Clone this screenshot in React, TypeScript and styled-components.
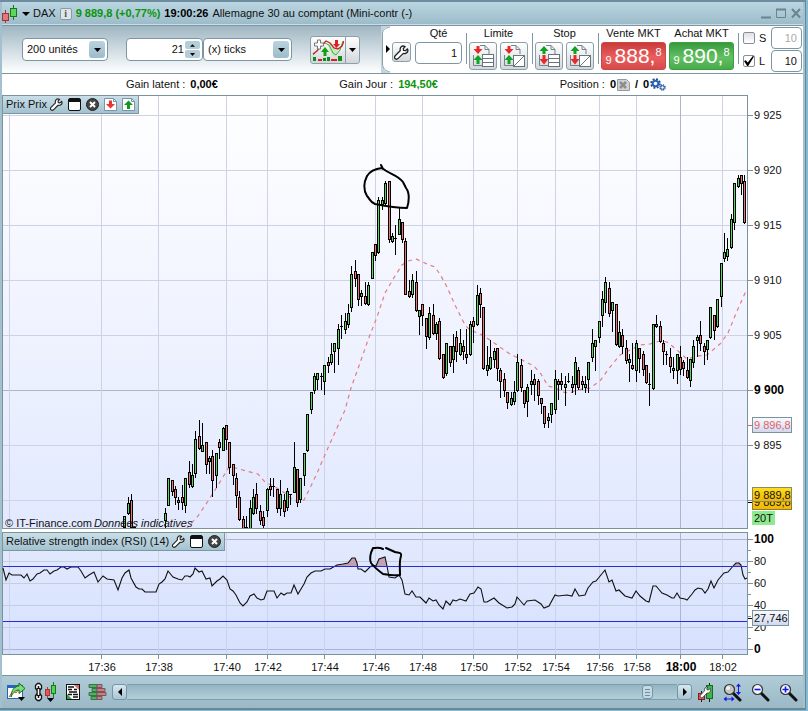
import React from "react";
import styled, { createGlobalStyle, css } from "styled-components";

const GlobalStyle = createGlobalStyle`
  * { box-sizing: border-box; }
  body {
    margin: 0;
    background: #86b9d4;
    font-family: "Liberation Sans", Arial, sans-serif;
    font-size: 11px;
    line-height: 13px;
    color: #111;
  }
  button, input, select { font: inherit; color: inherit; margin: 0; padding: 0; }
  svg { display: block; flex: none; }
`;

/* ---------- window frame ---------- */

const Window = styled.main`
  border-top: 2px solid #6d8d9e;
  border-bottom: 2px solid #6b8794;
  border-right: 1px solid #6b8794;
  margin-right: 2px;
  padding: 0 2px 0 2px;
  background: #a2c0cd;
`;

const TitleBar = styled.header`
  display: flex;
  align-items: center;
  height: 24px;
  border-bottom: 1px solid #7c97a3;
  box-shadow: 0 -1px 0 #c9dde6 inset;
  background: linear-gradient(#bbd6e2, #9bbac8);
`;

const Ghost = styled.button`
  display: inline-flex;
  align-items: center;
  justify-content: center;
  border: 0;
  background: none;
  flex: none;
`;

const Instrument = styled(Ghost)`
  gap: 3px;
`;

const InfoButton = styled.button`
  width: 12px;
  height: 12px;
  margin: 0 4px;
  border: 1px solid #8a9aa3;
  border-radius: 2px;
  background: #dfe6ea;
  font: bold 10px/9px "Liberation Serif", serif;
  color: #555;
`;

const Quote = styled.strong`
  color: #0b940b;
`;

const Clock = styled.strong`
  margin: 0 4px;
  color: #000;
`;

const WindowButtons = styled.div`
  display: flex;
  gap: 4px;
  margin-left: auto;
  padding-right: 2px;
`;

/* ---------- toolbar ---------- */

const Toolbar = styled.div`
  display: flex;
  height: 48px;
  border-bottom: 1px solid #7d97a2;
  background: #fff;
`;

const ChartControls = styled.div`
  display: flex;
  align-items: center;
  flex: 1;
  padding-left: 20px;
  background: linear-gradient(#9fb6c2, #d4dfe5 55%, #ffffff);
`;

const field = css`
  border: 1px solid #7b97a6;
  border-radius: 4px;
  background: #fff;
`;

const SelectBox = styled.label<{ $width: number; $gap: number }>`
  ${field}
  position: relative;
  display: block;
  width: ${(p) => p.$width}px;
  height: 23px;
  margin-right: ${(p) => p.$gap}px;
  select {
    appearance: none;
    width: 100%;
    height: 21px;
    padding-left: 4px;
    border: 0;
    border-radius: 4px;
    background: none;
  }
`;

const SelectArrow = styled.span`
  position: absolute;
  top: 2px;
  right: 2px;
  display: grid;
  place-items: center;
  width: 16px;
  height: 17px;
  border-radius: 3px;
  background: linear-gradient(#b9d3de, #9dbccb);
  pointer-events: none;
`;

const Stepper = styled.div`
  ${field}
  display: flex;
  align-items: center;
  width: 77px;
  height: 23px;
  padding-right: 2px;
  input {
    width: 57px;
    border: 0;
    background: none;
    text-align: right;
    outline: none;
  }
`;

const StepButtons = styled.div`
  display: grid;
  gap: 1px;
  margin-left: 1px;
`;

const StepButton = styled.button`
  display: grid;
  place-items: center;
  width: 15px;
  height: 8px;
  border: 0;
  border-radius: 2px;
  background: #b3ced9;
`;

const raised = css`
  display: grid;
  place-items: center;
  border: 1px solid #8ba0aa;
  border-radius: 3px;
  background: linear-gradient(#ffffff, #d3d7da);
`;

const SplitButton = styled.div`
  display: flex;
  height: 28px;
  margin-left: 18px;
`;

const IndicatorButton = styled.button`
  ${raised}
  width: 36px;
  border-radius: 3px 0 0 3px;
`;

const MenuButton = styled.button`
  ${raised}
  width: 15px;
  margin-left: -1px;
  border-radius: 0 3px 3px 0;
`;

const TradePanel = styled.div`
  display: flex;
  flex: none;
`;

const Fold = styled.button`
  width: 10px;
  height: 47px;
  border: 0;
  background: none;
`;

const WrenchButton = styled.button`
  ${raised}
  width: 19px;
  height: 20px;
  margin: 16px 4px 0 1px;
`;

const Group = styled.div`
  display: grid;
  align-content: start;
  justify-items: center;
  row-gap: 2px;
  padding-top: 1px;
`;

const Deals = styled.div`
  display: flex;
  gap: 3px;
`;

const ButtonPair = styled.div`
  display: flex;
  gap: 3px;
`;

const OrderButton = styled.button`
  ${raised}
  width: 28px;
  height: 28px;
`;

const Divider = styled.span`
  width: 1px;
  height: 31px;
  margin: 7px 2px 0 4px;
  background: #7e98a4;
`;

const NumberField = styled.input<{ $width: number; $muted?: boolean }>`
  ${field}
  width: ${(p) => p.$width}px;
  height: 22px;
  padding-right: 4px;
  text-align: right;
  color: ${(p) => (p.$muted ? "#a9a9a9" : "#111")};
`;

const DealButton = styled.button<{ $side: "sell" | "buy" }>`
  display: flex;
  justify-content: center;
  width: 65px;
  height: 28px;
  border: 1px solid ${(p) => (p.$side === "sell" ? "#c94848" : "#3d9e43")};
  border-radius: 3px;
  background: ${(p) =>
    p.$side === "sell"
      ? "linear-gradient(#c93b3b, #ea5e5e 55%, #d84a4a)"
      : "linear-gradient(#379a3c, #63c063 55%, #48ab4b)"};
  color: #fff;
  b { font-size: 21px; line-height: 26px; font-weight: 400; }
`;

const Lead = styled.span`
  align-self: end;
  padding-bottom: 2px;
  margin-right: 3px;
`;

const Tail = styled.sup`
  font-size: 11px;
  line-height: 19px;
`;

const Protection = styled.div`
  display: grid;
  grid-template-columns: 12px 8px 31px;
  column-gap: 4px;
  row-gap: 1px;
  align-items: center;
  align-content: start;
  padding: 1px 1px 0 2px;
`;

const Tick = styled.input`
  appearance: none;
  display: grid;
  place-items: center;
  width: 12px;
  height: 12px;
  border: 1px solid #7f929c;
  border-radius: 2px;
  background: linear-gradient(#e0e0e0, #ffffff);
  &:checked { background: #fff; }
  &:checked::after {
    content: "";
    width: 10px;
    height: 10px;
    background: #000;
    clip-path: polygon(0 50%, 18% 42%, 38% 66%, 88% 0, 100% 6%, 42% 100%, 32% 100%);
  }
`;

/* ---------- status line ---------- */

const Status = styled.div`
  display: grid;
  grid-template-columns: 213fr 220fr 243fr;
  align-items: center;
  height: 21px;
  padding-left: 124px;
  background: #fff;
`;

const Metric = styled.div`
  display: flex;
  align-items: center;
  gap: 5px;
  b { color: #000; }
`;

const Gain = styled.b`
  && { color: #0b940b; }
`;

const Count = styled.span`
  display: flex;
  align-items: center;
  gap: 1px;
`;

/* ---------- charts ---------- */

const Pane = styled.section`
  position: relative;
  background: #fff;
  > svg { width: 100%; height: auto; }
  text { font-size: 11px; fill: #111; }
  text.major { font-size: 12px; font-weight: bold; fill: #000; }
  text.average { fill: #e06464; }
`;

const PaneTag = styled.div`
  position: absolute;
  top: 1px;
  left: 1px;
  display: flex;
  align-items: center;
  gap: 3px;
  height: 18px;
  padding: 0 3px;
  border-right: 1px solid #7d97a2;
  border-bottom: 1px solid #7d97a2;
  background: linear-gradient(#c9dfe8, #a3c2cf);
`;

/* ---------- bottom bar ---------- */

const BottomBar = styled.footer`
  display: flex;
  align-items: center;
  height: 32px;
  padding: 0 5px;
  background: linear-gradient(#b0ccd8, #9ab8c6);
`;

const Tools = styled.div<{ $gap: number }>`
  display: flex;
  align-items: center;
  gap: ${(p) => p.$gap}px;
`;

const Scroller = styled.div`
  display: flex;
  align-items: center;
  flex: 1;
  margin: 0 6px 0 5px;
`;

const ScrollButton = styled.button`
  display: grid;
  place-items: center;
  width: 15px;
  height: 16px;
  border: 1px solid #7696a5;
  border-radius: 3px;
  background: linear-gradient(#d6e6ed, #a9c6d3);
`;

const ScrollRange = styled.input`
  appearance: none;
  flex: 1;
  min-width: 0;
  height: 16px;
  border: 1px solid #7f9eac;
  border-width: 1px 0;
  background: linear-gradient(#94b4c2, #b3cfda);
  &::-webkit-slider-thumb {
    appearance: none;
    width: 11px;
    height: 14px;
    border: 1px solid #7696a5;
    border-radius: 3px;
    background: repeating-linear-gradient(transparent 0 1px, #6e8f9f 1px 2px, transparent 2px 3px) center / 5px 8px no-repeat, #c3dae4;
  }
`;

/* ---------- icons ---------- */

const Down = ({ w = 7, h = 4 }: { w?: number; h?: number }) => (
  <svg width={w} height={h} viewBox="0 0 8 4" preserveAspectRatio="none"><path d="M0 0h8L4 4z" fill="#000" /></svg>
);
const Up = () => <svg width="5" height="3" viewBox="0 0 6 3"><path d="M0 3h6L3 0z" fill="#000" /></svg>;

const CandlesIcon = () => (
  <svg width="17" height="20" viewBox="0 0 17 20">
    <path d="M3.5 6v13" stroke="#a33" />
    <rect x=".5" y="9.500" width="6" height="7" fill="#e07a7a" stroke="#a33333" />
    <path d="M11.500 1v15" stroke="#187818" />
    <rect x="8.500" y="4.500" width="6" height="8" fill="#5ed65e" stroke="#187818" />
  </svg>
);

const WrenchIcon = ({ size = 13 }: { size?: number }) => (
  <svg width={size} height={size} viewBox="0 0 14 14">
    <path
      d="M12.500 3.600 10.800 5.300 8.900 5.100 8.700 3.200 10.400 1.500C8.600.6 6.800 1.100 6 2.700c-.4.9-.4 1.600-.1 2.500L.9 10.300c-.7.900-.4 1.900.3 2.500.7.600 1.700.6 2.500-.1l5-4.900c.9.300 1.700.3 2.600-.2 1.500-.8 2-2.500 1.200-4z"
      fill="#fff" stroke="#222" strokeWidth="1.200" strokeLinejoin="round"
    />
  </svg>
);

const MaximizeIcon = () => (
  <svg width="13" height="13" viewBox="0 0 13 13">
    <rect x=".5" y=".5" width="12" height="12" rx="1.500" fill="#fff" stroke="#111" />
    <path d="M1 1h11v3H1z" fill="#111" />
  </svg>
);

const CloseIcon = () => (
  <svg width="13" height="13" viewBox="0 0 13 13">
    <circle cx="6.500" cy="6.500" r="6" fill="#444" stroke="#222" />
    <path d="m4 4 5 5m0-5-5 5" stroke="#fff" strokeWidth="2" />
  </svg>
);

const ArrowDoc = ({ up }: { up?: boolean }) => (
  <svg width="13" height="13" viewBox="0 0 13 13">
    <path d="M.5.5h9l3 3v9H.5z" fill="#fff" stroke="#7b93a8" />
    <path d="M9.500.5v3h3" fill="none" stroke="#7b93a8" />
    {up
      ? <path d="M6.500 2.500 11 7H8v4H5V7H2z" fill="#0b9d19" />
      : <path d="M5 2.500h3V6h3l-4.500 4.500L2 6h3z" fill="#e33" />}
  </svg>
);

const IndicatorIcon = () => (
  <svg width="32" height="24" viewBox="0 0 32 24">
    <path d="m16 7 4 10 3 2 3-6-3-2-3-6z" fill="#c4ebc0" />
    <path d="M1 17 4 14 9 7l4-2 4 2 4 8 3 2 4-5 3-9" fill="none" stroke="#36b336" />
    <path d="m1 16 4-3 3-4 6-6 4 2 4 5 4 1 4-3 2-5" fill="none" stroke="#c62626" strokeWidth="1.300" />
    <path d="M5.500 2h3v3h3v3h-3v3h-3V8h-3V5h3z" fill="#fff" stroke="#777" />
    <path d="M11.500 18v-4H9l4-5 4 5h-2.500v4z" fill="#10a010" />
    <path d="M23 2h3v4h2l-3.500 4L21 6h2z" fill="#e02020" />
    <path d="M1 19h3v4H1zM11 20h3v3h-3zM15 19h3v4h-3zM26 18h4v5h-4z" fill="#0c8c18" />
    <path d="M6 21h4v2H6zM19 21h6v2h-6z" fill="#d82222" />
  </svg>
);

const OrderIcon = ({ stop, diagonal }: { stop?: boolean; diagonal?: boolean }) => {
  const top = stop ? "#0ea322" : "#e62a2a";
  const bottom = stop ? "#e62a2a" : "#0ea322";
  return (
    <svg width="26" height="26" viewBox="0 0 26 26">
      <path d="M10 2.500h5l4 4V11M15 2.500v4h4M3.500 12v10.500H12" fill="none" stroke="#77838a" />
      {diagonal ? (
        <g fill="#fff" stroke="#69757c"><rect x="12.500" y="12.500" width="11" height="11" /><path d="m13 23 10-10" /></g>
      ) : (
        <g fill="#fff" stroke="#69757c"><rect x="12.500" y="11.500" width="11" height="4" /><rect x="12.500" y="15.500" width="11" height="4" /><rect x="12.500" y="19.500" width="11" height="4" /></g>
      )}
      <path d={stop ? "M8 3 12.500 8h-3v3h-3V8h-3z" : "M6.500 3h3v3h3L8 11 3.500 6h3z"} fill={top} />
      <path d={stop ? "M6.500 12h3v4h3L8 21.500 3.500 16h3z" : "M8 12l4.500 5h-3v4h-3v-4h-3z"} fill={bottom} />
    </svg>
  );
};

const CancelDocIcon = () => (
  <svg width="13" height="12" viewBox="0 0 13 12">
    <path d="M.5.5h9l3 3v8H.5z" fill="#d2d2d2" stroke="#999" />
    <path d="m3 3 6 6m0-6-6 6" stroke="#8d8d8d" strokeWidth="2.500" />
  </svg>
);

const GearsIcon = () => (
  <svg width="16" height="13" viewBox="0 0 16 13" fill="none">
    <circle cx="5.500" cy="5.500" r="4.300" stroke="#1c4d9c" strokeWidth="2" strokeDasharray="1.900 1.477" />
    <circle cx="5.500" cy="5.500" r="2.800" stroke="#2d62b5" strokeWidth="2" />
    <circle cx="12.500" cy="9.500" r="2.500" stroke="#1c4d9c" strokeWidth="1.500" strokeDasharray="1.200 .763" />
    <circle cx="12.500" cy="9.500" r="1.700" stroke="#2d62b5" />
  </svg>
);

const ShareChartIcon = () => (
  <svg width="19" height="20" viewBox="0 0 19 20">
    <rect x=".5" y="3.500" width="15" height="13" fill="#fff" stroke="#2b62ba" />
    <path d="M1 4h14v2H1z" fill="#2b62ba" />
    <path d="m2 15 4-6 3 2 3-4" fill="none" stroke="#e04040" />
    <path d="M4 15C4 8 8 4 12 4V1l6 5.500-6 5V8C9 8 6 10 4 15z" fill="#79dd73" stroke="#13701b" />
    <path d="M11 15h7l-3.500 4z" fill="#000" />
  </svg>
);

const LinkIcon = () => (
  <svg width="24" height="20" viewBox="0 0 24 20">
    <g fill="#fff" stroke="#111" strokeWidth="1.300">
      <path d="M3.500 1.500h2l2 2v3l-2 2h-2l-2-2v-3zM3.500 11.500h2l2 2v3l-2 2h-2l-2-2v-3z" />
    </g>
    <path d="M4.500 4v2M4.500 14v2" stroke="#111" strokeWidth="1.500" />
    <path d="M4.500 6v8" stroke="#111" strokeWidth="4" /><path d="M4.500 7v6" stroke="#fff" strokeWidth="1.500" />
    <path d="M13.500 5v11" stroke="#a33" /><rect x="11.500" y="7.500" width="4" height="6" fill="#e05858" stroke="#a33" />
    <path d="M19.500 0v16" stroke="#187818" /><rect x="17.500" y="3.500" width="4" height="8" fill="#52d152" stroke="#187818" />
    <path d="M13 16h7l-3.500 4z" fill="#000" />
  </svg>
);

const NewsIcon = () => (
  <svg width="14" height="16" viewBox="0 0 14 16">
    <rect x=".5" y=".5" width="13" height="15" fill="#fff" stroke="#111" />
    <path d="M2 3h6M2 5.500h4M8 5.500h3M3 8h8M2 10.500h4M7 10.500h5M7 13h5" stroke="#111" strokeWidth="1.500" />
    <path d="M8 1h5v5z" fill="#db6a6a" /><path d="M1 10v5h5z" fill="#2fa342" />
  </svg>
);

const DepthIcon = () => (
  <svg width="19" height="18" viewBox="0 0 19 18">
    <path d="M1 1.500h8v3H1zM4 5.500h5v3H4zM1 9.500h8v3H1zM3 13.500h6v3H3z" fill="#3cbf4f" stroke="#4a6a58" />
    <path d="M9 1.500h5v3H9zM9 5.500h8v3H9zM9 9.500h9v3H9zM9 13.500h5v3H9z" fill="#db7878" stroke="#6d5a60" />
  </svg>
);

const CandleWrenchIcon = () => (
  <svg width="16" height="19" viewBox="0 0 16 19">
    <path d="M11.500 0v19M3.500 8v11" stroke="#1b1b1b" />
    <rect x="8.500" y="2.500" width="6" height="13" fill="#3cb64a" stroke="#196b24" />
    <rect x=".5" y="10.500" width="6" height="6" fill="#e05555" stroke="#7c2222" />
    <path d="M12 5.500 10.500 7 9 6.800 8.800 5.200 10 4C7.500 3.500 6 5.500 6.600 7.800L2.500 12c-1 2 .8 3.500 2.500 2.200L9 10c2.500.5 4.300-1.800 3-4.500z" fill="#fff" stroke="#333" strokeWidth=".8" />
  </svg>
);

const ZoomIcon = ({ kind }: { kind: "fit" | "out" | "in" }) => (
  <svg width="19" height="19" viewBox="0 0 19 19">
    <path d="m10 10 7 7" stroke="#111" strokeWidth="3" strokeLinecap="round" />
    <circle cx="6.500" cy="6.500" r="5" fill={kind === "fit" ? "#c4c4c4" : "#f2f7ff"} stroke="#333" strokeWidth="1.200" />
    {kind === "fit" ? (
      <>
        <circle cx="5" cy="5" r="2" fill="#f1f1f1" />
        <path d="M15.500 2v8M2 16h8" stroke="#1414e6" />
        <path d="m13 3.500 2.500-3 2.500 3zM13 9l2.500 3L18 9zM3.500 13.500.500 16l3 2.500zM8.500 13.500l3 2.500-3 2.500z" fill="#1414e6" />
      </>
    ) : (
      <path d={kind === "in" ? "M3.500 6.500h6M6.500 3.500v6" : "M3.500 6.500h6"} stroke="#1414e6" strokeWidth="1.600" />
    )}
  </svg>
);

/* ---------- chart data ---------- */

// Each candle: x, high, body top, body bottom, low, direction.
const CANDLES = `
124 516 516 527 529 g;128 497 503 513 514 g;131 494 500 527 528 r;134 527 527 528 528 d;
165 508 513 520 528 g;168 478 478 505 505 g;172 480 480 491 495 r;175 486 489 497 504 r;178 497 500 502 509 r;182 485 497 502 509 r;185 478 478 505 512 g;
189 461 472 484 487 r;192 464 475 486 487 g;195 431 439 473 477 g;199 420 436 448 449 r;202 423 445 451 451 g;206 442 442 464 473 r;209 456 458 461 473 g;
212 450 456 480 496 r;216 453 453 475 487 g;219 439 442 447 458 r;223 427 428 450 450 g;226 425 425 439 449 r;229 442 442 467 473 r;233 464 464 475 484 r;
236 473 478 495 507 r;239 491 497 519 520 r;243 516 519 528 528 r;246 516 527 528 528 d;250 500 508 528 528 g;253 489 497 513 514 g;256 483 494 508 513 r;
260 505 511 520 524 r;263 511 517 525 528 r;267 488 489 510 516 g;270 478 486 489 495 r;273 478 486 486 496 d;277 489 489 508 512 r;280 480 494 508 515 g;284 494 500 511 516 r;
287 488 491 507 510 g;290 494 494 494 504 d;294 442 467 492 492 g;297 469 469 502 506 r;300 478 478 499 502 g;304 453 453 475 485 g;307 414 414 450 451 g;
311 392 392 409 413 g;314 373 376 390 393 g;317 373 373 379 389 g;321 373 376 376 389 d;324 365 365 381 394 g;328 357 362 365 372 r;331 343 354 362 364 g;
334 343 343 351 372 g;338 324 329 348 364 g;341 315 326 326 338 d;345 313 321 329 333 g;348 304 313 324 327 g;351 266 274 307 311 g;355 260 271 278 286 r;
358 274 274 299 305 r;361 290 293 296 305 g;365 282 296 303 304 r;368 282 285 304 305 g;372 252 252 278 278 g;375 244 244 255 260 r;378 197 200 252 253 g;
382 197 200 204 209 g;385 181 183 203 204 g;389 181 181 239 242 r;392 233 236 241 242 g;395 225 238 238 254 d;399 208 219 234 234 g;402 222 222 239 242 r;
405 238 241 294 294 r;409 280 291 296 297 r;412 274 280 294 297 g;416 271 282 310 311 r;419 310 310 316 334 g;422 304 304 315 325 r;426 318 318 336 348 r;
429 307 313 337 339 g;433 304 315 333 334 r;436 322 324 333 339 g;439 318 321 358 359 r;443 354 354 377 378 r;446 343 343 373 375 g;450 346 346 362 366 r;
453 334 346 359 372 g;456 331 337 351 361 r;460 329 343 354 355 g;463 340 346 351 359 r;466 329 354 357 363 r;470 321 324 354 355 g;473 317 321 326 342 r;
477 285 295 324 325 g;480 288 293 304 317 r;483 307 307 368 369 r;487 346 365 370 375 g;490 340 357 368 369 g;494 348 351 359 367 g;497 348 348 368 380 r;
500 368 370 381 397 r;504 373 379 390 396 r;507 392 392 402 408 r;511 392 398 404 405 g;514 381 392 401 404 g;517 354 362 390 391 g;521 359 365 387 391 r;
524 390 390 403 407 r;527 384 387 401 416 g;531 370 381 384 394 g;534 374 379 384 400 r;538 379 381 395 404 r;541 398 398 403 413 r;544 406 406 423 427 r;
548 413 417 420 427 g;551 403 403 414 422 g;555 370 379 409 413 g;558 379 381 384 399 r;561 373 381 384 389 r;565 376 384 387 405 g;568 373 381 381 382 d;
572 376 384 387 392 r;575 357 362 384 394 g;578 367 370 387 389 r;582 376 381 384 389 r;585 376 384 387 392 g;588 362 362 379 392 g;592 329 343 357 361 g;
595 340 340 346 370 g;599 321 321 337 342 g;602 291 299 315 326 g;605 277 282 302 312 g;609 282 288 313 316 r;612 302 302 310 331 g;616 304 304 344 345 r;
619 321 332 346 347 g;622 329 335 346 353 r;626 340 348 360 363 r;629 354 359 362 381 g;632 343 365 368 369 r;636 340 343 370 381 g;639 348 348 358 372 r;
643 351 354 369 375 r;646 365 365 382 383 r;649 373 384 384 405 d;653 324 324 388 389 g;656 315 324 326 327 g;660 321 326 341 342 r;663 340 343 351 364 r;
666 351 354 354 364 d;670 348 357 366 372 r;673 357 368 370 378 g;677 354 354 370 383 g;680 346 357 369 374 r;683 360 362 368 375 r;687 357 370 377 378 r;
690 359 359 380 386 g;693 340 346 362 367 g;697 335 337 340 356 g;700 321 335 343 350 r;704 343 346 351 364 r;707 340 340 349 359 g;710 307 307 337 338 g;
714 315 315 330 339 r;717 299 299 326 327 g;721 263 263 296 306 g;724 233 252 258 261 g;727 238 249 256 260 g;731 214 219 247 248 g;734 183 183 222 229 g;
738 175 178 186 187 g;741 175 175 183 194 r;744 175 181 222 223 r`
  .split(";")
  .map((row) => row.trim().split(" "))
  .map(([x, ...rest]) => ({ x: +x, high: +rest[0], top: +rest[1], bottom: +rest[2], low: +rest[3], dir: rest[4] }));

const AVERAGE =
  "186,529 198,516 210,498 220,482 229,467 236,468 246,471 258,474 265,482 275,487 285,493 292,499 299,502 304,500 310,488 318,471 327,450 337,428 345,410 351,388 360,363 368,340 377,317 385,293 395,276 402,265 408,261 416,259 427,264 435,267 441,276 447,287 455,305 465,325 470,330 480,334 487,338 497,345 510,354 520,359 534,366 541,374 548,386 556,388 562,392 570,393 577,390 590,388 600,381 610,367 620,355 630,350 640,345 650,344 660,341 667,342 677,350 687,359 697,356 707,355 720,344 728,333 737,311 746,291";

const RSI =
  "3,568 6,580 9,573 12,575 21,575 24,578 27,574 30,581 33,579 37,574 40,573 44,570 47,570 50,574 54,571 57,570 61,567 64,567 67,569 71,567 78,567 81,571 85,578 89,575 94,572 98,582 103,576 107,579 114,580 118,590 122,578 125,573 129,570 131,578 136,587 139,589 142,589 145,592 156,592 159,584 162,582 165,579 168,571 173,577 178,579 182,580 185,576 188,576 190,577 193,574 195,568 199,572 202,571 206,579 210,578 212,586 217,581 220,579 223,576 227,580 230,589 233,591 236,595 240,603 243,606 247,602 250,596 254,594 257,598 261,600 264,599 267,591 274,591 277,598 281,593 284,595 287,593 291,593 294,585 298,594 301,589 304,584 307,577 311,573 315,571 321,571 325,569 330,569 337,565 343,564 348,563 352,558 355,558 357,563 358,569 361,569 365,572 370,567 373,565 376,566 379,559 385,557 387,566 389,577 395,578 399,575 402,580 405,594 409,595 412,591 416,597 420,597 424,601 426,603 429,598 433,601 436,600 439,605 443,609 446,601 450,605 453,600 456,601 460,599 466,601 470,594 474,593 478,587 481,589 484,602 487,602 494,598 499,603 507,608 512,607 515,604 517,597 524,605 527,601 535,600 541,604 544,608 549,606 555,595 558,596 567,595 572,596 575,589 579,596 585,595 588,588 593,582 596,581 605,570 609,582 612,580 616,591 619,590 625,596 632,598 636,591 640,596 646,601 649,602 653,586 656,586 662,593 667,595 672,598 674,598 677,593 680,598 685,599 687,600 692,594 695,590 698,588 702,589 705,593 708,589 711,581 714,588 718,580 724,573 728,572 734,565 736,563 739,563 741,565 743,575 745,579 747,578";

const TIMES = [
  { x: 9, label: "" }, { x: 101, label: "17:36" }, { x: 158, label: "17:38" }, { x: 226, label: "17:40" },
  { x: 267, label: "17:42" }, { x: 324, label: "17:44" }, { x: 375, label: "17:46" }, { x: 422, label: "17:48" },
  { x: 473, label: "17:50" }, { x: 517, label: "17:52" }, { x: 555, label: "17:54" }, { x: 599, label: "17:56" },
  { x: 636, label: "17:58" }, { x: 680, label: "18:00", major: true }, { x: 722, label: "18:02" },
];

const PRICES = [
  { y: 115, label: "9 925" }, { y: 170, label: "9 920" }, { y: 225, label: "9 915" }, { y: 280, label: "9 910" },
  { y: 335, label: "9 905" }, { y: 390, label: "9 900", major: true }, { y: 445, label: "9 895" }, { y: 500, label: "" },
];

const LEVELS = [
  { y: 539, label: "100", major: true }, { y: 561, label: "80" }, { y: 583, label: "60" },
  { y: 605, label: "40" }, { y: 627, label: "20" }, { y: 649, label: "0", major: true },
];

const FILLS: Record<string, string> = { g: "#55d860", r: "#ee7474", d: "#000" };
const gridColor = (major?: boolean) => (major ? "#aeb4cf" : "#cdd3e4");

const Vertical = ({ from, to }: { from: number; to: number }) => (
  <>
    {TIMES.map((t) => <path key={t.x} d={`M${t.x + 0.5} ${from}V${to}`} stroke={gridColor(t.major)} />)}
  </>
);

const PriceChart = () => (
  <svg viewBox="2 95 801 437" role="img" aria-label="Prix">
    <defs>
      <linearGradient id="sky" x1="0" y1="0" x2="0" y2="1">
        <stop offset="0" stopColor="#ffffff" /><stop offset="1" stopColor="#e2e9ff" />
      </linearGradient>
      <linearGradient id="tag" x1="0" y1="0" x2="0" y2="1">
        <stop offset="0" stopColor="#fafbff" /><stop offset="1" stopColor="#ced8ee" />
      </linearGradient>
      <linearGradient id="gold" x1="0" y1="0" x2="0" y2="1">
        <stop offset="0" stopColor="#ffe01e" /><stop offset="1" stopColor="#f0b400" />
      </linearGradient>
      <clipPath id="plot"><rect x="3" y="96" width="744" height="432" /></clipPath>
    </defs>
    <rect x="2.500" y="95.500" width="745" height="433" fill="url(#sky)" stroke="#7b939d" />
    <g clipPath="url(#plot)">
      {PRICES.map((p) => <path key={p.y} d={`M3 ${p.y + 0.5}H747`} stroke={gridColor(p.major)} />)}
      <Vertical from={96} to={528} />
      <polyline points={AVERAGE} fill="none" stroke="#e57c84" strokeWidth="1.200" strokeDasharray="4 4" />
      <g shapeRendering="crispEdges">
        {CANDLES.map((c) => (
          <g key={c.x}>
            <rect x={c.x} y={c.high} width="1" height={c.low - c.high + 1} />
            <rect x={c.x - 1} y={c.top} width="3" height={c.bottom - c.top + 1} />
            {c.bottom - c.top > 1 && (
              <rect x={c.x} y={c.top + 1} width="1" height={c.bottom - c.top - 1} fill={FILLS[c.dir]} />
            )}
          </g>
        ))}
      </g>
    </g>
    <path d="M381 165l2 4M382 168c-8 1-12 3-15 8-4 8-3 15 0 20 3 3 3 6 8 8 10 2 20 4 32 4 2-6 3-15-1-20l-3-6c-5-7-14-8-21-14"
      fill="none" stroke="#000" strokeWidth="2" strokeLinecap="round" strokeLinejoin="round" />
    <text x="5" y="527">© IT-Finance.com</text>
    <text x="94" y="527" fontStyle="italic">Données indicatives</text>
    {PRICES.map((p) => (
      <g key={p.y}>
        <path d={`M748 ${p.y + 0.5}h5`} stroke="#7b939d" />
        <text x="754" y={p.y + 4} className={p.major ? "major" : undefined}>{p.label}</text>
      </g>
    ))}
    <path d="M748 425.500h5" stroke="#e06464" />
    <rect x="752.500" y="417.500" width="39" height="15" fill="url(#tag)" stroke="#7b939d" />
    <text x="754" y="429" className="average">9 896,8</text>
    <path d="M748 502.500h5" stroke="#000" />
    <rect x="752.500" y="494.500" width="39" height="15" fill="url(#gold)" stroke="#8d7c38" />
    <text x="754" y="506">9 889,8</text>
    <rect x="752.500" y="487.500" width="39" height="14" fill="url(#gold)" stroke="#8a8b62" />
    <text x="754" y="499">9 889,8</text>
    <rect x="752" y="511" width="23" height="14" fill="#8eea8e" />
    <text x="754" y="522">20T</text>
  </svg>
);

const RsiChart = () => (
  <svg viewBox="2 532 801 144" role="img" aria-label="Relative strength index">
    <defs>
      <linearGradient id="dusk" x1="0" y1="0" x2="0" y2="1">
        <stop offset="0" stopColor="#e3eafe" /><stop offset="1" stopColor="#d7e1fe" />
      </linearGradient>
      <clipPath id="over"><rect x="320" y="533" width="427" height="33" /></clipPath>
    </defs>
    <rect x="2.500" y="532.500" width="745" height="122" fill="url(#dusk)" stroke="#7b939d" />
    {LEVELS.map((l) => <path key={l.y} d={`M3 ${l.y + 0.5}H747`} stroke={l.major ? "#aeb4cf" : "#c5cde2"} />)}
    <Vertical from={533} to={654} />
    <path d={`M3 610L${RSI} L747 610z`} fill="#c3a0b4" clipPath="url(#over)" />
    <polyline points={RSI} fill="none" stroke="#111" strokeWidth="1.100" />
    <path d="M3 566.500H747M3 621.500H747" stroke="#2a2ad8" />
    <path d="M383 549c-4-2-7-1-10-1-2 4-4 10-2 15 3 4 8 8 12 11 6 1 12 2 17 1 0-8-1-13 1-19 1-4-3-3-6-4l-9-4"
      fill="none" stroke="#000" strokeWidth="2" strokeLinecap="round" strokeLinejoin="round" />
    {LEVELS.map((l) => (
      <g key={l.y}>
        <path d={`M748 ${l.y + 0.5}h5${l.y < 649 ? `M748 ${l.y + 11.5}h3` : ""}`} stroke="#7b939d" />
        <text x="754" y={l.y + 4} className={l.major ? "major" : undefined}>{l.label}</text>
      </g>
    ))}
    <path d="M748 618.500h5" stroke="#000" />
    <rect x="752.500" y="610.500" width="36" height="15" fill="url(#tag)" stroke="#7b939d" />
    <text x="754" y="622">27,746</text>
    {TIMES.filter((t) => t.label).map((t) => (
      <g key={t.x}>
        <path d={`M${t.x + 0.5} 655v4`} stroke="#7b939d" />
        <text x={t.x + 1} y="671" textAnchor="middle" className={t.major ? "major" : undefined}>{t.label}</text>
      </g>
    ))}
    <path d="M2 675.500H803" stroke="#7b939d" />
  </svg>
);

/* ---------- page ---------- */

export default function App() {
  return (
    <>
      <GlobalStyle />
      <Window>
        <TitleBar>
          <Instrument aria-label="Instrument DAX">
            <CandlesIcon /><Down w={8} /><span>DAX</span>
          </Instrument>
          <InfoButton aria-label="Information">i</InfoButton>
          <Quote>9 889,8 (+0,77%)</Quote>
          <Clock>19:00:26</Clock>
          <span>Allemagne 30 au comptant (Mini-contr (-)</span>
          <WindowButtons>
            <Ghost aria-label="Réduire"><svg width="11" height="11"><path d="M0 9.500h10" stroke="#6a838f" strokeWidth="2" /></svg></Ghost>
            <Ghost aria-label="Agrandir"><svg width="11" height="11"><path d="M.5 1.500h9v8h-9z" fill="none" stroke="#6a838f" /><path d="M0 1.500h10" stroke="#6a838f" strokeWidth="2" /></svg></Ghost>
            <Ghost aria-label="Fermer"><svg width="10" height="11"><path d="m1 1 8 8.500m0-8.500-8 8.500" stroke="#6a838f" strokeWidth="2" /></svg></Ghost>
          </WindowButtons>
        </TitleBar>

        <Toolbar>
          <ChartControls>
            <SelectBox $width={86} $gap={18}>
              <select aria-label="Nombre d'unités"><option>200 unités</option></select>
              <SelectArrow><Down /></SelectArrow>
            </SelectBox>
            <Stepper>
              <input type="text" aria-label="Période" defaultValue="21" />
              <StepButtons>
                <StepButton aria-label="Augmenter"><Up /></StepButton>
                <StepButton aria-label="Diminuer"><Down w={5} h={3} /></StepButton>
              </StepButtons>
            </Stepper>
            <SelectBox $width={89} $gap={0}>
              <select aria-label="Type d'unité"><option>(x) ticks</option></select>
              <SelectArrow><Down /></SelectArrow>
            </SelectBox>
            <SplitButton>
              <IndicatorButton aria-label="Ajouter un indicateur"><IndicatorIcon /></IndicatorButton>
              <MenuButton aria-label="Indicateurs"><Down /></MenuButton>
            </SplitButton>
          </ChartControls>
          <TradePanel>
            <Fold aria-label="Replier">
              <svg width="10" height="47">
                <path d="M0 0h10C4 1 1.500 3 1.500 8v30c0 5 3 8 8.500 9H0z" fill="#c5d3da" />
                <path d="M9 1C4 2 1.500 4 1.500 8v30c0 4 3 7 7.500 8" fill="none" stroke="#8aa2ad" />
                <path d="M5 19v8l4-4z" fill="#000" />
              </svg>
            </Fold>
            <WrenchButton aria-label="Réglages"><WrenchIcon size={15} /></WrenchButton>
            <Group>
              <label htmlFor="qty">Qté</label>
              <NumberField id="qty" $width={47} defaultValue="1" />
            </Group>
            <Divider />
            <Group>
              <span>Limite</span>
              <ButtonPair>
                <OrderButton aria-label="Limite liste"><OrderIcon /></OrderButton>
                <OrderButton aria-label="Limite graphique"><OrderIcon diagonal /></OrderButton>
              </ButtonPair>
            </Group>
            <Divider />
            <Group>
              <span>Stop</span>
              <ButtonPair>
                <OrderButton aria-label="Stop liste"><OrderIcon stop /></OrderButton>
                <OrderButton aria-label="Stop graphique"><OrderIcon stop diagonal /></OrderButton>
              </ButtonPair>
            </Group>
            <Divider />
            <Deals>
              <Group>
                <span>Vente MKT</span>
                <DealButton $side="sell"><Lead>9</Lead><b>888,</b><Tail>8</Tail></DealButton>
              </Group>
              <Group>
                <span>Achat MKT</span>
                <DealButton $side="buy"><Lead>9</Lead><b>890,</b><Tail>8</Tail></DealButton>
              </Group>
            </Deals>
            <Divider />
            <Protection>
              <Tick type="checkbox" id="stop" />
              <label htmlFor="stop">S</label>
              <NumberField aria-label="Distance stop" $width={31} $muted defaultValue="10" />
              <Tick type="checkbox" id="limit" defaultChecked />
              <label htmlFor="limit">L</label>
              <NumberField aria-label="Distance limite" $width={31} defaultValue="10" />
            </Protection>
          </TradePanel>
        </Toolbar>

        <Status>
          <Metric>Gain latent : <b>0,00€</b></Metric>
          <Metric>Gain Jour : <Gain>194,50€</Gain></Metric>
          <Metric>
            Position :
            <Count><b>0</b><CancelDocIcon /></Count>
            <b>/</b>
            <Count><b>0</b><GearsIcon /></Count>
          </Metric>
        </Status>

        <Pane>
          <PriceChart />
          <PaneTag>
            <span>Prix Prix</span>
            <Tools $gap={5}>
              <Ghost aria-label="Réglages du prix"><WrenchIcon /></Ghost>
              <Ghost aria-label="Agrandir le prix"><MaximizeIcon /></Ghost>
              <Ghost aria-label="Fermer le prix"><CloseIcon /></Ghost>
              <Ghost aria-label="Descendre"><ArrowDoc /></Ghost>
              <Ghost aria-label="Monter"><ArrowDoc up /></Ghost>
            </Tools>
          </PaneTag>
        </Pane>
        <Pane>
          <RsiChart />
          <PaneTag>
            <span>Relative strength index (RSI) (14)</span>
            <Tools $gap={5}>
              <Ghost aria-label="Réglages du RSI"><WrenchIcon /></Ghost>
              <Ghost aria-label="Agrandir le RSI"><MaximizeIcon /></Ghost>
              <Ghost aria-label="Fermer le RSI"><CloseIcon /></Ghost>
            </Tools>
          </PaneTag>
        </Pane>

        <BottomBar>
          <Tools $gap={8}>
            <Ghost aria-label="Partager"><ShareChartIcon /></Ghost>
            <Ghost aria-label="Lier"><LinkIcon /></Ghost>
            <Ghost aria-label="Actualités"><NewsIcon /></Ghost>
            <Ghost aria-label="Carnet d'ordres"><DepthIcon /></Ghost>
          </Tools>
          <Scroller>
            <ScrollButton aria-label="Reculer"><svg width="4" height="8"><path d="M4 0v8L0 4z" /></svg></ScrollButton>
            <ScrollRange type="range" aria-label="Position dans l'historique" min="0" max="1000" defaultValue="955" />
            <ScrollButton aria-label="Avancer"><svg width="4" height="8"><path d="M0 0v8l4-4z" /></svg></ScrollButton>
          </Scroller>
          <Tools $gap={9}>
            <Ghost aria-label="Style du graphique"><CandleWrenchIcon /></Ghost>
            <Ghost aria-label="Ajuster le zoom"><ZoomIcon kind="fit" /></Ghost>
            <Ghost aria-label="Zoom arrière"><ZoomIcon kind="out" /></Ghost>
            <Ghost aria-label="Zoom avant"><ZoomIcon kind="in" /></Ghost>
          </Tools>
        </BottomBar>
      </Window>
    </>
  );
}
